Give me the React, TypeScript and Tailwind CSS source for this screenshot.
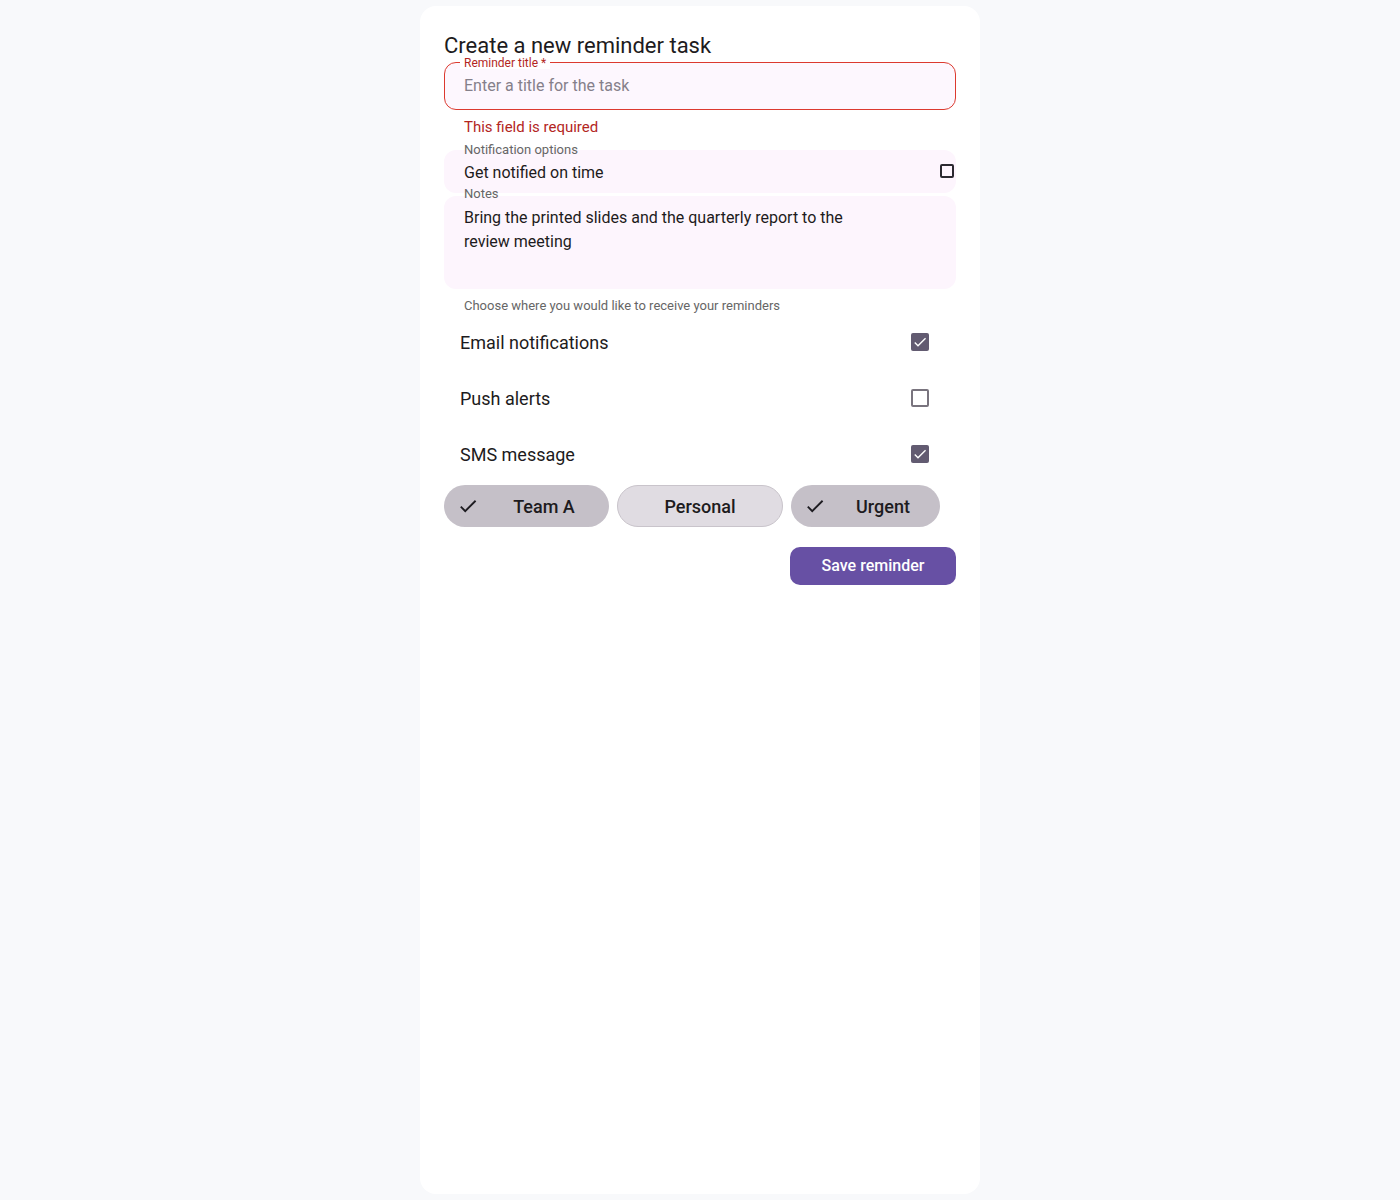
const CheckIcon = ({ className }: { className?: string }) => (
  <svg viewBox="0 0 24 24" className={className} fill="currentColor">
    <path d="M9 16.17 4.83 12l-1.42 1.41L9 19 21 7l-1.41-1.41z" />
  </svg>
)

const Checkbox = ({ checked }: { checked: boolean }) =>
  checked ? (
    <span className="block w-[18px] h-[18px] rounded-[2px] bg-[#625b71] flex items-center justify-center">
      <CheckIcon className="w-[16px] h-[16px] text-white" />
    </span>
  ) : (
    <span className="block w-[18px] h-[18px] rounded-[2px] border-2 border-[#79747e]" />
  )

const rows = [
  { label: "Email notifications", checked: true },
  { label: "Push alerts", checked: false },
  { label: "SMS message", checked: true },
]

const chips = [
  { label: "Team A", selected: true, w: "w-[165px]" },
  { label: "Personal", selected: false, w: "w-[166px]" },
  { label: "Urgent", selected: true, w: "w-[149px]" },
]

export default function App() {
  return (
    <div className="min-h-screen bg-[#f8f9fb] py-[6px] flex justify-center font-['Roboto',sans-serif] text-[#1d1b20]">
      <div className="w-[560px] h-[1188px] bg-white rounded-2xl px-6 pt-[29px]">
        <h1 className="text-[22px] leading-[22px]">Create a new reminder task</h1>

        <div className="relative mt-[5px] h-[48px] rounded-xl border-[1.5px] border-[#dc3a2f] bg-[#fdf7fe] flex items-center px-[19px]">
          <span className="absolute left-[15px] -top-[6px] bg-white px-1 text-[12px] leading-[12px] text-[#b3261e]">
            Reminder title *
          </span>
          <span className="text-[16px] text-[#85808a]">Enter a title for the task</span>
        </div>

        <p className="mt-[7px] px-5 text-[15px] leading-[20px] text-[#b3261e]">This field is required</p>

        <p className="mt-[7px] px-5 text-[13px] leading-[12px] text-[#666666] relative">Notification options</p>
        <div className="-mt-[6px] h-[43px] rounded-xl bg-[#fdf5fd] flex items-center pl-5">
          <span className="text-[16px] leading-[20px] mt-[2px]">Get notified on time</span>
          <span className="ml-auto mr-[2px] -mt-[2px] w-[14px] h-[14px] rounded-[2px] border-2 border-[#2b2930]" />
        </div>

        <p className="-mt-[6px] px-5 text-[13px] leading-[13px] text-[#666666] relative">Notes</p>
        <div className="-mt-[4px] h-[93px] rounded-xl bg-[#fdf5fd] px-5 pt-[10px]">
          <p className="text-[16px] leading-[24px] w-[400px]">
            Bring the printed slides and the quarterly report to the review meeting
          </p>
        </div>

        <p className="mt-[10px] px-5 text-[13px] leading-[14px] text-[#666666]">
          Choose where you would like to receive your reminders
        </p>

        <div className="mt-[1px] flex flex-col">
          {rows.map((r) => (
            <div key={r.label} className="h-[56px] flex items-center pl-4 pr-[27px]">
              <span className="text-[18px]">{r.label}</span>
              <span className="ml-auto flex">
                <Checkbox checked={r.checked} />
              </span>
            </div>
          ))}
        </div>

        <div className="mt-[3px] flex gap-2">
          {chips.map((c) => (
            <div
              key={c.label}
              className={`${c.w} h-[42px] rounded-full flex items-center text-[18px] font-medium ${
                c.selected ? "bg-[#c5c0c8] pl-[13px]" : "bg-[#e0dce2] border border-[#c9c4cb] justify-center"
              }`}
            >
              {c.selected && <CheckIcon className="w-[22px] h-[22px]" />}
              <span className={c.selected ? "flex-1 text-center" : ""}>{c.label}</span>
            </div>
          ))}
        </div>

        <div className="mt-[20px] flex justify-end">
          <button className="w-[166px] h-[38px] rounded-[10px] bg-[#6750a4] text-white text-[16px] font-medium">
            Save reminder
          </button>
        </div>
      </div>
    </div>
  )
}
